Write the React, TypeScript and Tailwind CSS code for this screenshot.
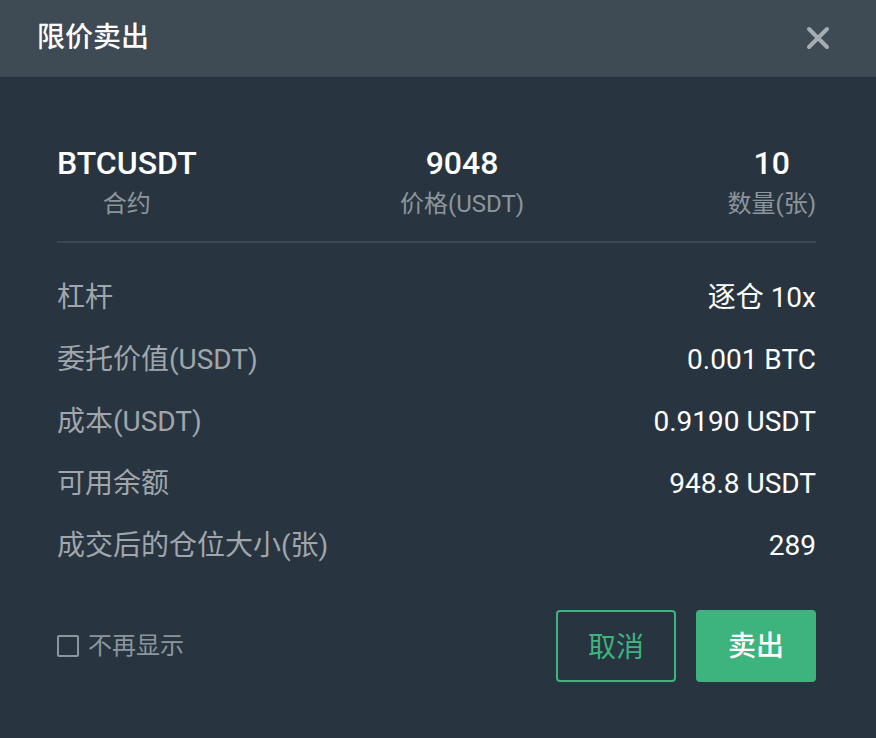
const font = { fontFamily: 'Roboto, "Noto Sans CJK SC", sans-serif' }

const rows: [string, string][] = [
  ["杠杆", "逐仓 10x"],
  ["委托价值(USDT)", "0.001 BTC"],
  ["成本(USDT)", "0.9190 USDT"],
  ["可用余额", "948.8 USDT"],
  ["成交后的仓位大小(张)", "289"],
]

const summary: [string, string][] = [
  ["BTCUSDT", "合约"],
  ["9048", "价格(USDT)"],
  ["10", "数量(张)"],
]

export default function App() {
  return (
    <div className="h-[738px] w-[876px] overflow-hidden bg-[#283540]" style={font}>
      <div className="flex h-[77px] items-center justify-between border-b border-[#36424c] bg-[#3e4a54] pl-[37px] pr-[46px]">
        <span className="text-[28px] font-medium text-white">限价卖出</span>
        <svg width="24" height="24" viewBox="0 0 24 24" className="text-[#a7acb1]">
          <path d="M3 3L21 21M21 3L3 21" stroke="currentColor" strokeWidth="4" strokeLinecap="round" />
        </svg>
      </div>

      <div className="pl-[57px] pr-[60px] pt-[66px]">
        <div className="flex justify-between">
          {summary.map(([value, label]) => (
            <div key={label} className="flex flex-col items-center">
              <div className="text-[32px] font-medium leading-[40px] text-white">{value}</div>
              <div className="mt-[4px] text-[24px] leading-[34px] text-[#8d959c]">{label}</div>
            </div>
          ))}
        </div>

        <div className="mt-[20px] h-[2px] bg-[#3b4751]" />

        <div className="pt-[24px]">
          {rows.map(([label, value]) => (
            <div key={label} className="flex h-[62px] items-center justify-between text-[28px]">
              <span className="text-[#a0a6ab]">{label}</span>
              <span className="text-white">{value}</span>
            </div>
          ))}
        </div>

        <div className="mt-[33px] flex items-center justify-between">
          <label className="flex items-center gap-[9px] text-[24px] text-[#8d959c]">
            <span className="h-[22px] w-[22px] rounded-[2px] border-2 border-[#8d959c]" />
            不再显示
          </label>
          <div className="flex gap-[20px]">
            <button className="h-[72px] w-[120px] rounded-[4px] border-2 border-[#3db37e] pt-[4px] text-[28px] text-[#3db37e]">
              取消
            </button>
            <button className="h-[72px] w-[120px] rounded-[4px] bg-[#3db37e] pt-[2px] text-[28px] font-medium text-white">
              卖出
            </button>
          </div>
        </div>
      </div>
    </div>
  )
}
